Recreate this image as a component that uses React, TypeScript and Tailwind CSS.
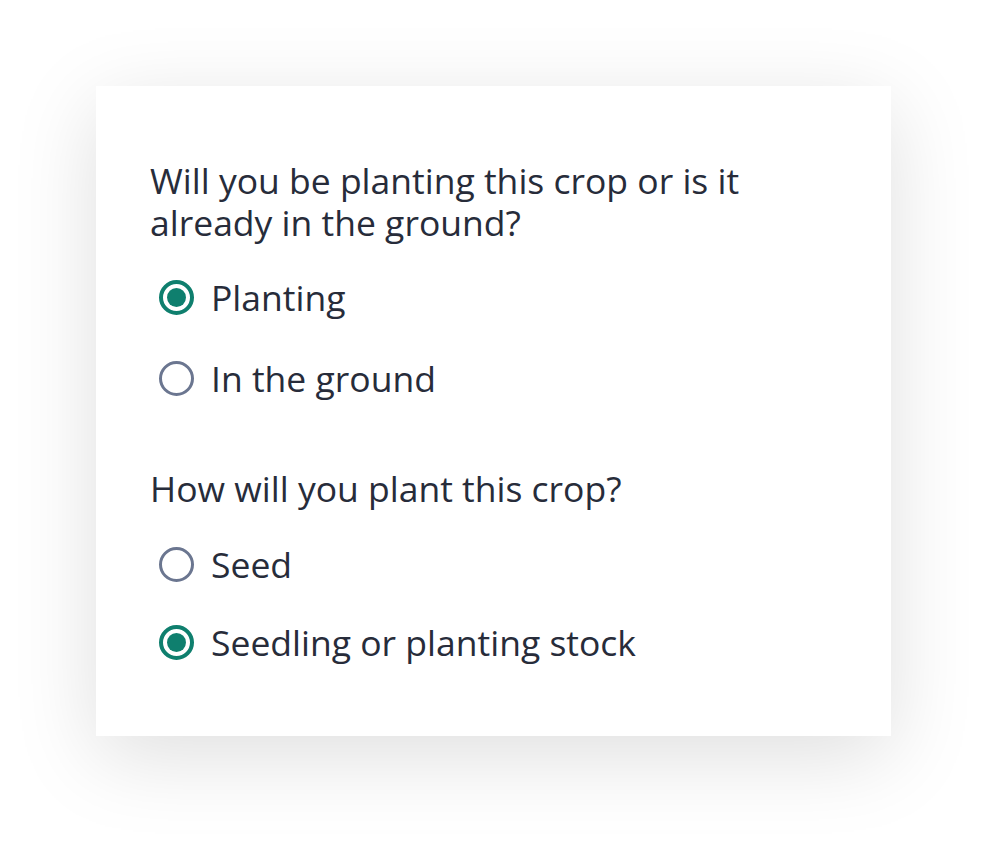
import React, { useState } from "react";

type RadioProps = { checked: boolean; label: string; onClick: () => void };

function Radio({ checked, label, onClick }: RadioProps) {
  return (
    <button type="button" onClick={onClick} className="flex items-center gap-[17px] h-[40px] text-left">
      {checked ? (
        <span className="w-[35px] h-[35px] rounded-full border-[4px] border-[#0f7f6e] flex items-center justify-center">
          <span className="w-[19px] h-[19px] rounded-full bg-[#0f7f6e]" />
        </span>
      ) : (
        <span className="w-[35px] h-[35px] rounded-full border-[3.5px] border-[#6b7690]" />
      )}
      <span className="text-[35.5px] leading-[40px] text-[#272c3a]">{label}</span>
    </button>
  );
}

export default function App() {
  const [a, setA] = useState("Planting");
  const [b, setB] = useState("Seedling or planting stock");
  return (
    <div className="w-[987px] h-[841px] bg-white relative" style={{ fontFamily: '"Open Sans", sans-serif' }}>
      <div className="absolute left-[96px] top-[86px] w-[795px] h-[650px] bg-white shadow-[0_20px_80px_rgba(0,0,0,0.13)] pl-[54px] pt-[73px] pr-[40px]">
        <p className="text-[35.5px] leading-[42px] text-[#272c3a]">
          Will you be planting this crop or is it
          <br />
          already in the ground?
        </p>
        <div className="mt-[34px] flex flex-col gap-[41px] pl-[9px]">
          {["Planting", "In the ground"].map((l) => (
            <Radio key={l} label={l} checked={a === l} onClick={() => setA(l)} />
          ))}
        </div>
        <p className="mt-[69px] text-[35.5px] leading-[42px] text-[#272c3a]">How will you plant this crop?</p>
        <div className="mt-[35px] flex flex-col gap-[38px] pl-[9px]">
          {["Seed", "Seedling or planting stock"].map((l) => (
            <Radio key={l} label={l} checked={b === l} onClick={() => setB(l)} />
          ))}
        </div>
      </div>
    </div>
  );
}
